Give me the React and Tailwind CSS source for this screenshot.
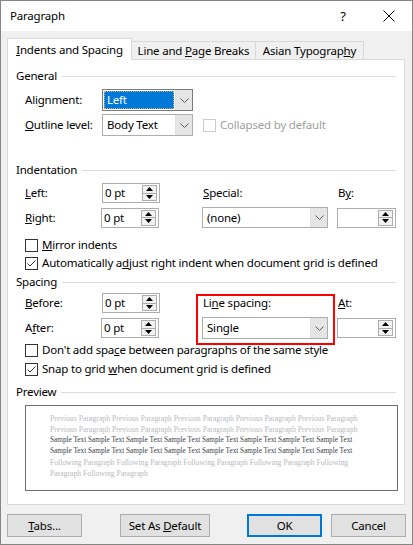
import React from "react";

const Chevron = () => (
  <svg width="9" height="5" viewBox="0 0 9 5" className="block">
    <path d="M0.5 0.5 L4.5 4.5 L8.5 0.5" fill="none" stroke="#5a5a5a" strokeWidth="1" />
  </svg>
);

function Select({ value, w, h = 22, focused = false, textClass = "" }) {
  return (
    <div
      className={`flex bg-white border ${focused ? "border-[#7a7a7a]" : "border-[#adadad]"} shrink-0`}
      style={{ width: w, height: h }}
    >
      <div className="flex-1 flex items-center p-[1px]">
        {focused ? (
          <div className="h-full w-full bg-[#0078d7] text-white flex items-center pl-[2px] border border-dotted border-[#c9b27a]">
            {value}
          </div>
        ) : (
          <span className={`pl-[3px] ${textClass}`}>{value}</span>
        )}
      </div>
      <div className="w-[17px] bg-[#e5e5e5] border-l border-[#e0e0e0] flex items-center justify-center">
        <Chevron />
      </div>
    </div>
  );
}

function Spinner({ value = "", w = 58 }) {
  return (
    <div className="flex bg-white border border-[#adadad] h-[20px] shrink-0" style={{ width: w }}>
      <div className="flex-1 flex items-center pl-[2px]">{value}</div>
      <div className="flex flex-col w-[15px] my-[1px] mr-[2px]">
        <div className="flex-1 border border-[#adadad] bg-[#f2f2f2] flex items-center justify-center">
          <svg width="7" height="4" viewBox="0 0 7 4" className="block">
            <path d="M0 4 L3.5 0 L7 4 Z" fill="#000" />
          </svg>
        </div>
        <div className="flex-1 border border-t-0 border-[#adadad] bg-[#f2f2f2] flex items-center justify-center">
          <svg width="7" height="4" viewBox="0 0 7 4" className="block">
            <path d="M0 0 L7 0 L3.5 4 Z" fill="#000" />
          </svg>
        </div>
      </div>
    </div>
  );
}

function Checkbox({ checked = false, disabled = false }) {
  return (
    <div
      className={`w-[13px] h-[13px] border bg-white shrink-0 flex items-center justify-center ${
        disabled ? "border-[#cccccc]" : "border-[#333333]"
      }`}
    >
      {checked && (
        <svg width="11" height="11" viewBox="0 0 11 11" className="block">
          <path d="M1.5 5.5 L4 8 L9.5 2.5" fill="none" stroke="#333" strokeWidth="1" />
        </svg>
      )}
    </div>
  );
}

function GroupHeader({ children, mt }) {
  return (
    <div className={`flex items-center h-[16px] ${mt}`}>
      <span className="whitespace-nowrap">{children}</span>
      <div className="flex-1 h-px bg-[#dcdcdc] ml-[5px] mr-[0px]" />
    </div>
  );
}

function CheckRow({ checked, children, mt }) {
  return (
    <div className={`flex items-center h-[16px] pl-[9px] ${mt}`}>
      <Checkbox checked={checked} />
      <span className="ml-[4px] whitespace-nowrap">{children}</span>
    </div>
  );
}

const prevLine = "Previous Paragraph Previous Paragraph Previous Paragraph Previous Paragraph Previous Paragraph";
const sampleLine = "Sample Text Sample Text Sample Text Sample Text Sample Text Sample Text Sample Text Sample Text";

export default function App() {
  return (
    <div className="w-[413px] h-[545px] bg-[#f0f0f0] border border-[#858585] flex flex-col text-[11.5px] tracking-[-0.2px] text-black font-['Noto_Sans',sans-serif] overflow-hidden leading-none">
      {/* Title bar */}
      <div className="h-[30px] bg-white flex items-center shrink-0">
        <span className="pl-[9px]">Paragraph</span>
        <div className="ml-auto flex h-full">
          <div className="w-[46px] h-full flex items-center justify-center text-[13px]">?</div>
          <div className="w-[46px] h-full flex items-center justify-center">
            <svg width="12" height="12" viewBox="0 0 12 12" className="block">
              <path d="M0.5 0.5 L11.5 11.5 M11.5 0.5 L0.5 11.5" stroke="#000" strokeWidth="1" />
            </svg>
          </div>
        </div>
      </div>

      {/* Tabs */}
      <div className="mt-[7px] pl-[6px] flex items-end h-[21px] shrink-0">
        <div className="relative z-10 -mb-[1px] h-[22px] w-[125px] bg-white border border-b-0 border-[#d9d9d9] flex items-center justify-center">
          <span><u>I</u>ndents and Spacing</span>
        </div>
        <div className="h-[18px] w-[124px] border-t border-r border-[#d9d9d9] flex items-center justify-center pt-[1px]">
          <span>Line and <u>P</u>age Breaks</span>
        </div>
        <div className="h-[18px] w-[108px] border-t border-r border-[#d9d9d9] flex items-center justify-center pt-[1px]">
          <span>Asian Typograp<u>h</u>y</span>
        </div>
      </div>

      {/* Panel */}
      <div className="ml-[6px] w-[398px] h-[446px] bg-white border border-[#d9d9d9] flex flex-col px-[8px] shrink-0">
        <GroupHeader mt="mt-[8px]">General</GroupHeader>

        <div className="mt-[5px] h-[22px] flex items-center pl-[9px]">
          <span className="w-[77px]">Ali<u>g</u>nment:</span>
          <Select value="Left" w={91} focused />
        </div>
        <div className="mt-[3px] h-[22px] flex items-center pl-[9px]">
          <span className="w-[77px]"><u>O</u>utline level:</span>
          <Select value="Body Text" w={91} />
          <div className="ml-[10px] flex items-center">
            <Checkbox disabled />
            <span className="ml-[4px] text-[#a0a0a0]">Collapsed by default</span>
          </div>
        </div>

        <GroupHeader mt="mt-[26px]">Indentation</GroupHeader>

        <div className="mt-[5px] h-[20px] flex items-center pl-[9px]">
          <span className="w-[77px]"><u>L</u>eft:</span>
          <Spinner value="0 pt" />
          <span className="ml-[43px] w-[135px]"><u>S</u>pecial:</span>
          <span>B<u>y</u>:</span>
        </div>
        <div className="mt-[4px] h-[21px] flex items-center pl-[9px]">
          <span className="w-[77px]"><u>R</u>ight:</span>
          <Spinner value="0 pt" />
          <div className="ml-[43px]">
            <Select value="(none)" w={126} h={21} />
          </div>
          <div className="ml-[9px]">
            <Spinner w={59} />
          </div>
        </div>

        <CheckRow mt="mt-[9px]"><u>M</u>irror indents</CheckRow>
        <CheckRow checked mt="mt-[2px]">Automatically a<u>d</u>just right indent when document grid is defined</CheckRow>

        <GroupHeader mt="mt-[3px]">Spacing</GroupHeader>

        <div className="relative">
          <div className="mt-[3px] h-[20px] flex items-center pl-[9px]">
            <span className="w-[77px]"><u>B</u>efore:</span>
            <Spinner value="0 pt" />
            <span className="ml-[43px] w-[135px]">Li<u>n</u>e spacing:</span>
            <span><u>A</u>t:</span>
          </div>
          <div className="mt-[4px] h-[22px] flex items-center pl-[9px]">
            <span className="w-[77px]">A<u>f</u>ter:</span>
            <Spinner value="0 pt" />
            <div className="ml-[43px]">
              <Select value="Single" w={126} h={22} />
            </div>
            <div className="ml-[9px]">
              <Spinner w={59} />
            </div>
          </div>
          <div className="absolute left-[180px] top-[4px] w-[139px] h-[51px] border-2 border-[#ff0000] pointer-events-none" />
        </div>

        <CheckRow mt="mt-[3px]">Don't add spa<u>c</u>e between paragraphs of the same style</CheckRow>
        <CheckRow checked mt="mt-[3px]">Snap to grid <u>w</u>hen document grid is defined</CheckRow>

        <GroupHeader mt="mt-[7px]">Preview</GroupHeader>

        <div className="mt-[5px] ml-[9px] w-[373px] h-[86px] border border-[#6e6e6e] bg-white pl-[24px] pt-[7px] font-['Liberation_Serif',serif] tracking-normal leading-[11px] whitespace-nowrap">
          <div className="text-[7.7px] text-[#b8b8c0]">{prevLine}</div>
          <div className="text-[7.7px] text-[#b8b8c0]">{prevLine}</div>
          <div className="text-[7.25px] text-[#404048]">{sampleLine}</div>
          <div className="text-[7.25px] text-[#404048]">{sampleLine}</div>
          <div className="text-[7.7px] text-[#b8b8c0]">Following Paragraph Following Paragraph Following Paragraph Following Paragraph Following</div>
          <div className="text-[7.7px] text-[#b8b8c0]">Paragraph Following Paragraph</div>
        </div>
      </div>

      {/* Buttons */}
      <div className="mt-[9px] h-[23px] flex pl-[6px] shrink-0">
        <div className="w-[75px] h-full bg-[#e1e1e1] border border-[#adadad] flex items-center justify-center">
          <span><u>T</u>abs...</span>
        </div>
        <div className="ml-[38px] w-[90px] h-full bg-[#e1e1e1] border border-[#adadad] flex items-center justify-center">
          <span>Set As <u>D</u>efault</span>
        </div>
        <div className="ml-[37px] w-[75px] h-full bg-[#e1e1e1] border-2 border-[#0078d7] flex items-center justify-center">
          <span>OK</span>
        </div>
        <div className="ml-[9px] w-[75px] h-full bg-[#e1e1e1] border border-[#adadad] flex items-center justify-center">
          <span>Cancel</span>
        </div>
      </div>
    </div>
  );
}
